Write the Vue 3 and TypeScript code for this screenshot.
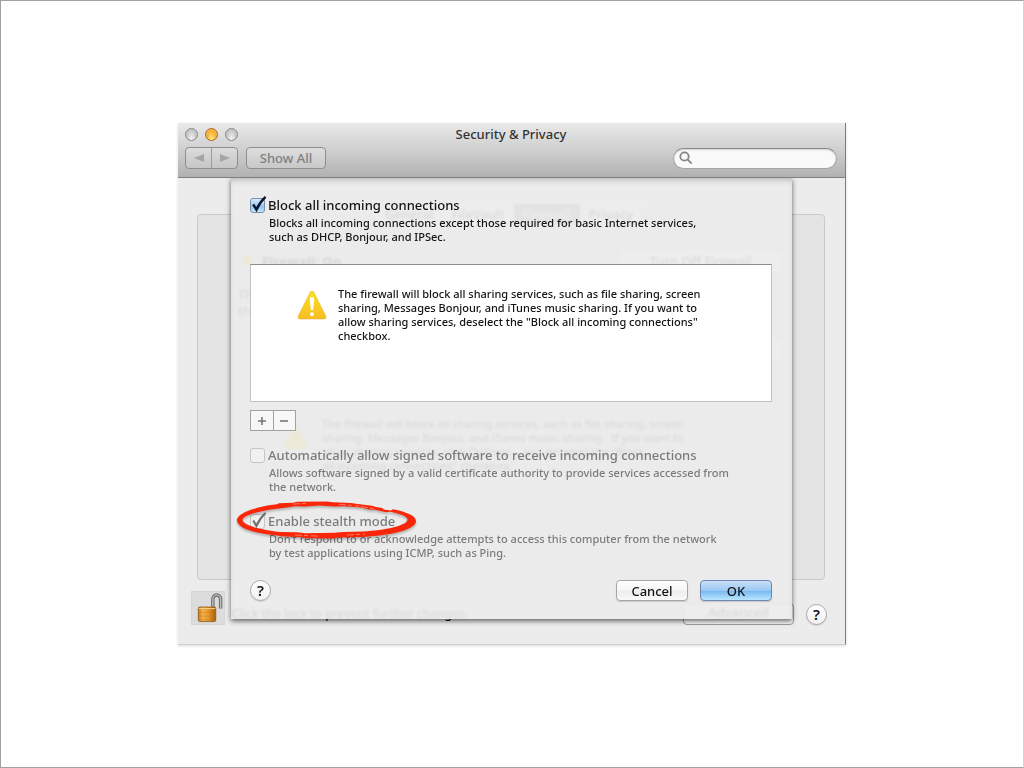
<script setup lang="ts">
import { ref } from 'vue'

const tabs = ['General', 'FileVault', 'Firewall', 'Privacy']
const blockAll = ref(true)
const allowSigned = ref(false)
const stealth = ref(true)
const query = ref('')
</script>

<template>
  <main class="slide">
    <section class="window" aria-label="Security &amp; Privacy">
      <header class="toolbar">
        <div class="titlebar">
          <div class="lights">
            <button class="light" aria-label="Close"></button>
            <button class="light amber" aria-label="Minimize"></button>
            <button class="light" aria-label="Zoom"></button>
          </div>
          <h1>Security &amp; Privacy</h1>
        </div>
        <div class="tools">
          <div class="nav">
            <button aria-label="Back" disabled>
              <svg viewBox="0 0 10 8"><path d="M10 0v8L0 4z" /></svg>
            </button>
            <button aria-label="Forward" disabled>
              <svg viewBox="0 0 10 8"><path d="M0 0v8l10-4z" /></svg>
            </button>
          </div>
          <button class="showall" disabled>Show All</button>
          <label class="search">
            <svg viewBox="0 0 14 14">
              <circle cx="5.5" cy="5.5" r="4.2" />
              <path d="M8.7 8.7l4 4" />
            </svg>
            <input v-model="query" type="search" aria-label="Search" />
          </label>
        </div>
      </header>

      <div class="body">
        <div class="pane">
          <nav class="tabs">
            <button v-for="t in tabs" :key="t" :class="{ on: t === 'Firewall' }">{{ t }}</button>
          </nav>
          <div class="group">
            <div class="status">
              <i class="dot"></i>
              <strong>Firewall: On</strong>
              <button class="soft">Turn Off Firewall</button>
            </div>
            <p class="blurb">Th<br />the</p>
            <button class="soft options" aria-label="Options"></button>
            <div class="notice">
              <svg class="warn small" viewBox="0 0 30 30">
                <path class="tri" d="M13.4 1.8Q15 0 16.6 1.8L29 26.5Q29.5 29 27 29H3Q.5 29 1 26.5Z" />
              </svg>
              <p>
                The firewall will block all sharing services, such as file sharing, screen<br />
                sharing, Messages Bonjour, and iTunes music sharing.&nbsp; If you want to<br />
                allow sharing services, click Options… and deselect the “Block<br />
                all incoming connections” checkbox.
              </p>
            </div>
          </div>
          <footer class="foot">
            <button class="lock" aria-label="Lock">
              <svg viewBox="0 0 33 33">
                <defs>
                  <linearGradient id="brass" x1="0" x2="1">
                    <stop offset="0" stop-color="#c87a1c" />
                    <stop offset=".25" stop-color="#f2b04c" />
                    <stop offset=".6" stop-color="#e29529" />
                    <stop offset="1" stop-color="#a95f10" />
                  </linearGradient>
                </defs>
                <path d="M21.5 16V7.5a4 4.5 0 0 1 8 0V17" fill="none" stroke="#6f6f6f" stroke-width="3.6" />
                <path d="M21.5 16V7.5a4 4.5 0 0 1 8 0V17" fill="none" stroke="#bdbdbd" stroke-width="1.4" />
                <rect x="6.5" y="15.5" width="18" height="15" rx="1.5" fill="url(#brass)" stroke="#8f5513" stroke-width=".8" />
                <path d="M7 17h17" stroke="#f8cf86" />
                <path d="M7 21h17M7 25h17M7 28.5h17" stroke="#b66e16" stroke-opacity=".35" stroke-width=".8" />
              </svg>
            </button>
            <span class="locktext">Click the lock to prevent further changes.</span>
            <button class="advanced">Advanced</button>
            <button class="help" aria-label="Help">?</button>
          </footer>
        </div>

        <form class="sheet" @submit.prevent>
          <div class="option">
            <label class="check">
              <span class="box">
                <input v-model="blockAll" type="checkbox" />
                <svg v-if="blockAll" viewBox="0 0 14 14">
                  <path d="M3 6L6 11Q9 4 14.500-1" />
                </svg>
              </span>
              Block all incoming connections
            </label>
            <p class="hint">
              Blocks all incoming connections except those required for basic Internet services,<br />
              such as DHCP, Bonjour, and IPSec.
            </p>
          </div>

          <div class="list">
            <svg class="warn" viewBox="0 0 30 30">
              <defs>
                <linearGradient id="sun" x1="0" y1="0" x2="0" y2="1">
                  <stop offset="0" stop-color="#fde21c" />
                  <stop offset="1" stop-color="#f8bd25" />
                </linearGradient>
              </defs>
              <path d="M13.4 1.8Q15 0 16.6 1.8L29 26.5Q29.5 29 27 29H3Q.5 29 1 26.5Z" fill="url(#sun)" stroke="#e0ae2c" stroke-width=".5" />
              <path d="M12.8 9q0-2 2.200-2t2.200 2l-1.100 11h-2.200z" fill="#fff" />
              <circle cx="15" cy="24.3" r="2" fill="#fff" />
            </svg>
            <p>
              The firewall will block all sharing services, such as file sharing, screen<br />
              sharing, Messages Bonjour, and iTunes music sharing. If you want to<br />
              allow sharing services, deselect the "Block all incoming connections"<br />
              checkbox.
            </p>
          </div>

          <div class="plusminus">
            <button type="button" aria-label="Add" disabled>
              <svg viewBox="0 0 10 10"><path d="M5 1v8M1 5h8" /></svg>
            </button>
            <button type="button" aria-label="Remove" disabled>
              <svg viewBox="0 0 10 10"><path d="M1 5h8" /></svg>
            </button>
          </div>

          <div class="option dim">
            <label class="check">
              <span class="box"><input v-model="allowSigned" type="checkbox" disabled /></span>
              Automatically allow signed software to receive incoming connections
            </label>
            <p class="hint">
              Allows software signed by a valid certificate authority to provide services accessed from<br />
              the network.
            </p>
          </div>

          <div class="option dim last">
            <label class="check">
              <span class="box">
                <input v-model="stealth" type="checkbox" disabled />
                <svg v-if="stealth" viewBox="0 0 14 14">
                  <path d="M3 6L6 11Q9 4 14.500-1" />
                </svg>
              </span>
              Enable stealth mode
            </label>
            <p class="hint">
              Don’t respond to or acknowledge attempts to access this computer from the network<br />
              by test applications using ICMP, such as Ping.
            </p>
            <svg class="ring" viewBox="0 0 186 44" aria-hidden="true">
              <path
                fill-rule="evenodd"
                d="M2 22C1 15 17 9 36 6L42 5.200 44 4.200 58 3.800 62 2.800 92 2.600 98 3.300 116 4 121 4.800 137 6.800 141 8 147 9
                   149 10.500 156 11.500 158 10.200C172 13 181 17 181 22 181 30 160 36 128 38L104 38.500 98 39.500 72 39.300 66 38.300 46 37.300 42 36.500C20 34 4 30 2 22Z
                   M7.500 21.500C9 27 32 32 46 33L62 33.300 70 34.200 100 33.800 108 33 128 32.500C150 31 171 27 172.500 21 173 17.500 166 15 155 12.800L151 13.200 140 10.800 134 10.500 126 8.600 108 7.300 100 7.600 84 6.600 70 7.600 60 7.300 50 8.800C28 11 7.500 15.500 7.500 21.500Z"
              />
              <path class="scratch" d="M104 5.2l20 2M126 7.500l14 2.300M58 5l16-.8M60 36l24 1.200M112 36l18-1" />
            </svg>
          </div>

          <div class="actions">
            <button type="button" class="help" aria-label="Help">?</button>
            <button type="button" class="push">Cancel</button>
            <button type="submit" class="push ok">OK</button>
          </div>
        </form>
      </div>
    </section>
  </main>
</template>

<style>
body {
  margin: 0;
  background: #fff;
}
</style>

<style scoped>
* {
  box-sizing: border-box;
}
.slide {
  min-height: 100vh;
  display: flex;
  align-items: center;
  justify-content: center;
  border: 1px solid #a0a0a0;
  border-right-color: #d4d4d4;
  background: #fff;
  font: 550 13px/18px "Noto Sans", "Open Sans", sans-serif;
  color: #141414;
}
button,
input {
  font: inherit;
  color: inherit;
  margin: 0;
  padding: 0;
}
button {
  display: grid;
  place-items: center;
  white-space: nowrap;
}
h1,
p {
  margin: 0;
}
svg {
  display: block;
}
.window {
  width: 100%;
  max-width: 668px;
  background: #ececec;
  border-right: 1px solid #7c7c7c;
  border-bottom: 1px solid #cfcfcf;
  box-shadow: 0 1px 3px rgba(0, 0, 0, 0.14);
}
.toolbar {
  padding: 0 8px 8px 7px;
  background: linear-gradient(#e9e9e9, #cfcfcf 50%, #b1b1b1);
  border-bottom: 1px solid #7e7e7e;
}
.titlebar {
  display: grid;
  grid-template-columns: 1fr auto 1fr;
  align-items: center;
  height: 24px;
}
.lights {
  display: flex;
  gap: 7px;
  padding-bottom: 2px;
}
.light {
  width: 13px;
  height: 13px;
  border: 1px solid #858585;
  border-radius: 50%;
  background: radial-gradient(ellipse at 50% 90%, #f4f4f4, #c4c4c4 65%, #dcdcdc);
}
.light.amber {
  border-color: #a8691c;
  background: radial-gradient(ellipse at 50% 95%, #ffe98a, #f7ae35 60%, #fbc970);
}
h1 {
  font-size: 13px;
  line-height: 22px;
  font-weight: 500;
  color: #333;
  padding-bottom: 2px;
}
.tools {
  display: flex;
  gap: 8px;
  align-items: center;
}
.nav {
  display: flex;
  width: 53px;
  height: 22px;
  border: 1px solid #8e8e8e;
  border-radius: 4px;
  background: linear-gradient(#dcdcdc, #c6c6c6);
}
.nav button {
  flex: 1;
  border: 0;
  background: none;
}
.nav button + button {
  border-left: 1px solid #9c9c9c;
}
.nav svg {
  width: 10px;
  height: 8px;
  fill: #a5a5a5;
}
.showall {
  height: 22px;
  width: 80px;
  border: 1px solid #8e8e8e;
  border-radius: 4px;
  background: linear-gradient(#dedede, #c8c8c8);
  color: #808080;
}
.search {
  width: 164px;
  min-width: 0;
  margin-left: auto;
  display: flex;
  align-items: center;
  gap: 4px;
  height: 21px;
  padding: 0 8px 0 5px;
  border: 1px solid #a4a4a4;
  border-top-color: #868686;
  border-radius: 11px;
  background: #fafafa;
  box-shadow: inset 0 1px 2px rgba(0, 0, 0, 0.15);
}
.search svg {
  width: 14px;
  height: 14px;
  flex: none;
  fill: none;
  stroke: #868686;
  stroke-width: 1.8;
}
.search input {
  flex: 1;
  width: 100%;
  min-width: 0;
  border: 0;
  outline: 0;
  background: none;
  appearance: none;
}
.body {
  display: grid;
}
.pane,
.sheet {
  grid-area: 1 / 1;
}
.pane {
  display: flex;
  flex-direction: column;
  padding: 26px 18px 19px 13px;
}
.tabs {
  display: flex;
  justify-content: center;
  position: relative;
  z-index: 1;
  margin-bottom: -9px;
}
.tabs button {
  height: 19px;
  padding: 0 9px;
  border: 0;
  background: #f6f6f6;
}
.tabs .on {
  background: #7a7a7a;
  color: #fff;
}
.group {
  flex: 1;
  display: flex;
  flex-direction: column;
  margin-left: 6px;
  margin-right: 2px;
  padding: 36px 42px 0 40px;
  border: 1px solid #c9c9c9;
  border-radius: 4px;
  background: #e4e4e4;
}
.status {
  display: flex;
  align-items: center;
  gap: 10px;
  padding-left: 4px;
}
.dot {
  width: 10px;
  height: 10px;
  border-radius: 50%;
  background: #f5c400;
}
.soft {
  height: 20px;
  border: 0;
  border-radius: 4px;
  background: #fff;
}
.status .soft {
  margin-left: auto;
  width: 162px;
}
.blurb {
  margin-top: 15px;
  line-height: 17px;
}
.options {
  align-self: flex-end;
  margin-top: 19px;
  width: 120px;
}
.notice {
  display: flex;
  gap: 14px;
  margin-top: 58px;
  padding-left: 45px;
  font-size: 11px;
  line-height: 14px;
  white-space: nowrap;
}
.tri {
  fill: #f8c800;
}
.foot {
  display: flex;
  align-items: flex-start;
  margin-top: 11px;
}
.lock {
  width: 34px;
  height: 34px;
  border: 1px solid #d6d6d6;
  background: #dcdcdc;
}
.lock svg {
  width: 32px;
  height: 32px;
}
.locktext {
  padding: 14px 0 0 7px;
  font-size: 12px;
}
.advanced {
  margin: 12px 12px 0 auto;
  padding-bottom: 4px;
  width: 111px;
  height: 22px;
  border: 1px solid #9e9e9e;
  border-radius: 4px;
  background: #f8f8f8;
  line-height: 16px;
}
.help {
  width: 21px;
  height: 21px;
  border: 1px solid #a9a9a9;
  border-radius: 50%;
  background: linear-gradient(#fff, #f1f1f1);
  box-shadow: 0 1px 1px rgba(0, 0, 0, 0.12);
  font-size: 15px;
  line-height: 19px;
  font-weight: 600;
}
.foot .help {
  margin-top: 13px;
}
.sheet {
  z-index: 2;
  align-self: start;
  margin: 0 53px 25px;
  padding: 18px 20px 18px 19px;
  background: rgba(236, 236, 236, 0.92);
  backdrop-filter: blur(1px);
  box-shadow:
    inset 0 5px 6px -3px rgba(0, 0, 0, 0.22),
    0 2px 5px rgba(0, 0, 0, 0.6);
  clip-path: inset(0 -12px -14px -12px);
}
.option {
  position: relative;
}
.check {
  display: flex;
  align-items: center;
  gap: 3px;
}
.box {
  display: grid;
  width: 15px;
  height: 15px;
}
.box > * {
  grid-area: 1 / 1;
  width: 15px;
  height: 15px;
}
.box input {
  appearance: none;
  border: 1px solid #7c8da6;
  border-radius: 3px;
  background: linear-gradient(#dcebf9, #8fc4f3 60%, #c4e6fd);
}
.box svg {
  overflow: visible;
  pointer-events: none;
  fill: none;
  stroke: #0b1428;
  stroke-width: 2.2;
}
.hint {
  margin-top: 2px;
  padding-left: 19px;
}
.hint,
.list {
  font-size: 11px;
  line-height: 14px;
}
.dim {
  color: #7b7b7b;
}
.dim .box input {
  border-color: #c6c6c6;
  background: #f1f1f1;
}
.dim .box svg {
  stroke: #707070;
  stroke-width: 2;
}
.list {
  display: flex;
  gap: 11px;
  height: 138px;
  margin-top: 20px;
  padding: 22px 46px;
  border: 1px solid #c2c2c2;
  border-top-color: #8e8e8e;
  background: #fff;
  white-space: nowrap;
}
.warn {
  flex: none;
  width: 30px;
  height: 30px;
  margin-top: 3px;
}
.warn.small {
  width: 25px;
  height: 25px;
  margin-top: 8px;
}
.plusminus {
  display: flex;
  width: 46px;
  height: 21px;
  margin: 8px 0 15px;
  border: 1px solid #a2a2a2;
  background: #f7f7f7;
}
.plusminus button {
  flex: 1;
  border: 0;
  background: none;
}
.plusminus button + button {
  border-left: 1px solid #a2a2a2;
}
.plusminus svg {
  width: 10px;
  height: 10px;
  stroke: #777;
  stroke-width: 1.6;
}
.last {
  margin-top: 18px;
}
.ring {
  position: absolute;
  left: -15px;
  top: -13px;
  width: 186px;
  height: 44px;
  fill: #fa2609;
  filter: drop-shadow(0 2px 1px rgba(0, 0, 0, 0.25));
  pointer-events: none;
}
.scratch {
  fill: none;
  stroke: #f9b3a8;
  stroke-width: 0.6;
  stroke-dasharray: 7 2 4 3;
}
.actions {
  display: flex;
  align-items: center;
  gap: 12px;
  margin-top: 20px;
}
.actions .help {
  margin-right: auto;
}
.push {
  width: 72px;
  height: 21px;
  border: 1px solid #a6a6a6;
  border-radius: 4px;
  background: linear-gradient(#fff, #f4f4f4 50%, #ececec 51%, #fafafa);
  box-shadow: 0 1px 1px rgba(0, 0, 0, 0.15);
}
.ok {
  border-color: #6f87b4;
  background: linear-gradient(#c9e0f7, #9cc9f4 50%, #77b5f0 51%, #b9e6fe);
}
</style>
